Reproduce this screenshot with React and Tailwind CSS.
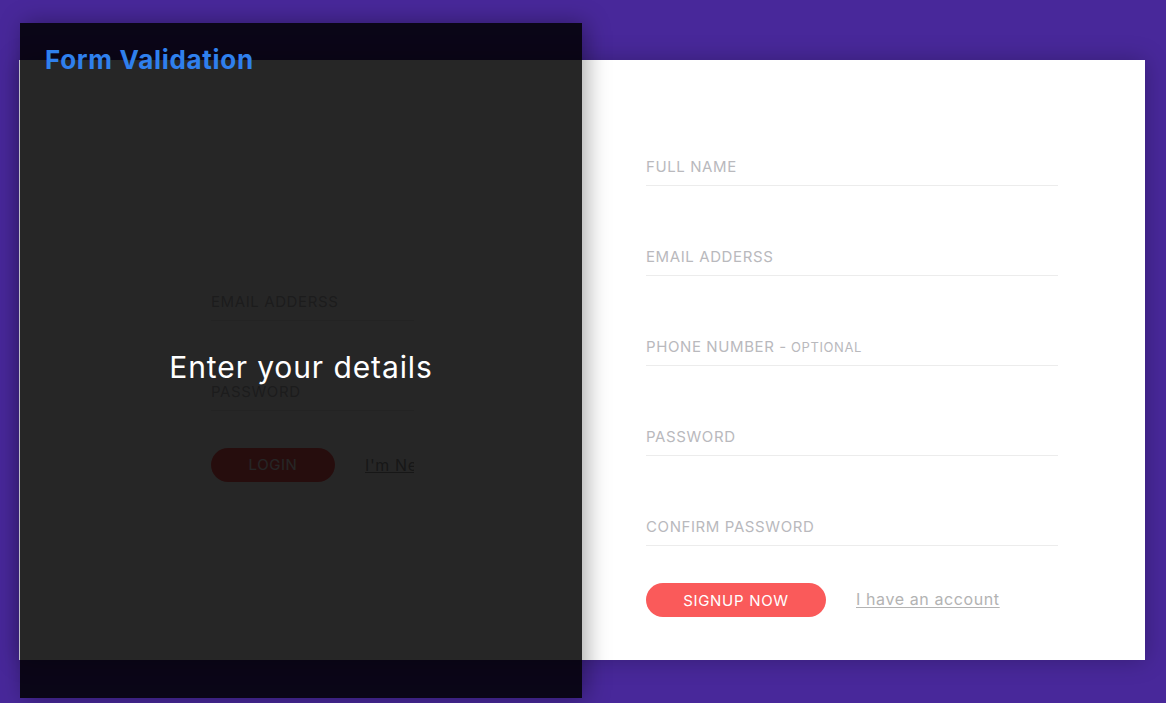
import React from 'react';

const font = { fontFamily: 'Inter, "Open Sans", sans-serif' };

const Field = ({ label, extra }) => (
  <div className="h-[40px] w-[412px] border-b border-[#ececec] flex items-end pb-[8px]">
    <span className="text-[15px] leading-[20px] tracking-[0.6px] text-[#b9b9bd] uppercase">
      {label}
      {extra && <span className="text-[13px]"> {extra}</span>}
    </span>
  </div>
);

export default function App() {
  return (
    <div className="min-h-screen w-full bg-[#48289a] pt-[60px] pl-[19px] pb-[43px]" style={font}>
      {/* Card */}
      <div className="relative w-[1126px] h-[600px] bg-white flex shadow-[0_0_22px_rgba(0,0,0,0.25)]">
        {/* Login side */}
        <div className="w-[563px] shrink-0 pl-[191px] pt-[221px] border-l border-[#d9d9e6]">
          <div className="w-[203px] overflow-hidden">
            <div className="w-[412px] flex flex-col gap-[50px]">
              <Field label="Email Adderss" />
              <Field label="Password" />
            </div>
            <div className="w-[412px] mt-[37px] flex items-center gap-[30px]">
              <button className="w-[124px] h-[34px] rounded-full bg-[#fa5a5a] text-white text-[15px] tracking-[0.6px]">LOGIN</button>
              <a className="text-[16px] tracking-[0.6px] text-[#9a9a9a] underline">I'm New Here</a>
            </div>
          </div>
        </div>

        {/* Signup side */}
        <div className="flex-1 pl-[64px] pt-[86px]">
          <div className="flex flex-col gap-[50px]">
            <Field label="Full Name" />
            <Field label="Email Adderss" />
            <Field label="Phone Number -" extra="optional" />
            <Field label="Password" />
            <Field label="Confirm Password" />
          </div>
          <div className="mt-[37px] flex items-center gap-[30px]">
            <button className="w-[180px] h-[34px] rounded-full bg-[#fa5a5a] text-white text-[15px] tracking-[0.7px] leading-none">
              SIGNUP NOW
            </button>
            <a className="text-[16px] leading-[20px] tracking-[0.6px] text-[#b3b3b3] underline underline-offset-2 -mt-[3px]">I have an account</a>
          </div>
        </div>

        {/* Overlay panel */}
        <div className="absolute left-[1px] top-[-37px] w-[562px] h-[675px] bg-black/85 flex flex-col shadow-[4px_0_22px_rgba(0,0,0,0.35)]">
          <h1 className="pl-[25px] pt-[21px] text-[26px] leading-[32px] tracking-[0.7px] font-bold text-[#2f80ed]">Form Validation</h1>
          <div className="flex-1 flex items-center justify-center pb-[40px]">
            <h2 className="text-[30px] leading-[40px] tracking-[0.9px] text-white">Enter your details</h2>
          </div>
        </div>
      </div>
    </div>
  );
}
